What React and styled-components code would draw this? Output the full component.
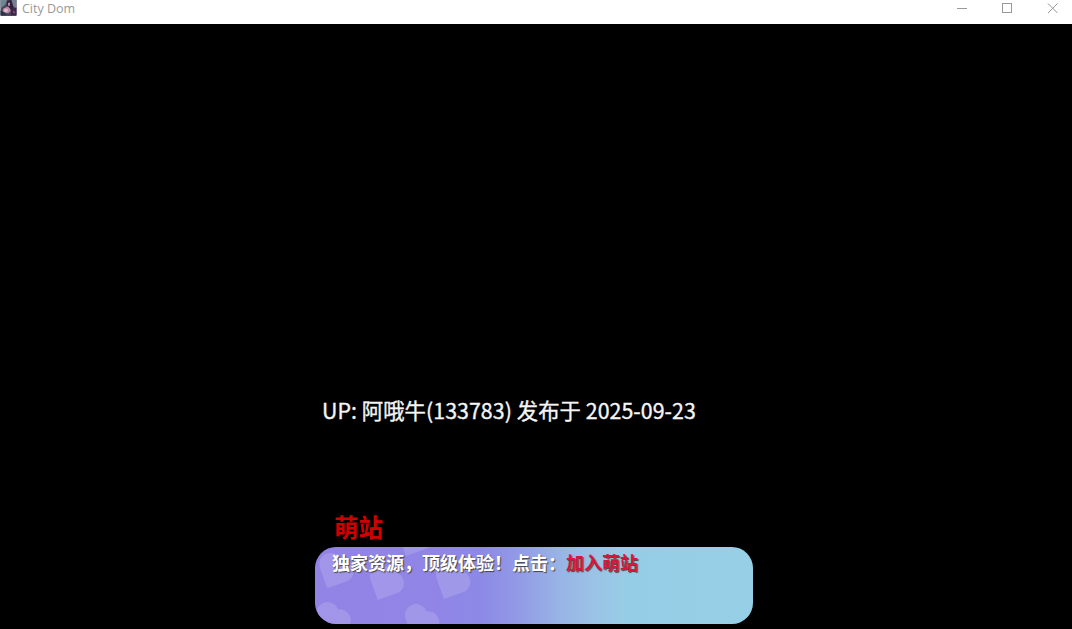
import styled, { createGlobalStyle } from "styled-components";

const hearts = [
  { x: 12.3, y: 41.3 },
  { x: 62.8, y: 53 },
  { x: 129, y: 52 },
  { x: 91, y: 9 },
  { x: 9.5, y: 90.4 },
  { x: 98, y: 92.4 },
];

const Avatar = () => (
  <AppIcon viewBox="0 0 17 17">
    <rect width="17" height="17" fill="#4b4560" />
    <path d="M0 0h7L5 5 0 9z" fill="#6d8790" />
    <path d="M12 0h5v9l-4-3z" fill="#77808f" />
    <path d="M7 1l4-1 2 5 1 4-4 1-3-4z" fill="#30213f" />
    <path d="M8 3h2v3H8z" fill="#c88fa3" />
    <path d="M3 9l5-2 2 2 1 3-3 2-6-1z" fill="#b98ba8" />
    <path d="M5 9l3 1-1 3-4-1z" fill="#e3b8c0" />
    <path d="M0 11l4 2 2 3H0z" fill="#263448" />
    <path d="M11 10l6-2v8h-6z" fill="#3b2546" />
    <path d="M13 11l3 2-2 2z" fill="#88517b" />
  </AppIcon>
);

const App = () => {
  return (
    <Window>
      <GlobalStyle />
      <TitleBar>
        <Avatar />
        <Title>City Dom</Title>
        <Controls viewBox="0 0 120 24">
          <path d="M5 8.5h10M50.500 3.500h9v9h-9z" />
          <path d="M96 3.500l9.500 9.500M105.500 3.500L96 13" shapeRendering="auto" />
        </Controls>
      </TitleBar>
      <Content>
        <Publisher>UP: 阿哦牛(133783) 发布于 2025-09-23</Publisher>
        <SiteName>萌站</SiteName>
        <Banner>
          <Hearts viewBox="0 0 438 77">
            {hearts.map(({ x, y }) => (
              <path
                key={`${x}-${y}`}
                d={`M${x} ${y}l-7.500 -20.500a11.150 11.150 0 0 1 21 -7.500a11.150 11.150 0 0 1 7.500 20.500z`}
              />
            ))}
          </Hearts>
          <Message>
            独家资源，顶级体验！点击：<JoinLink href="#">加入萌站</JoinLink>
          </Message>
        </Banner>
      </Content>
    </Window>
  );
};

const GlobalStyle = createGlobalStyle`
  body {
    margin: 0;
    background: #000;
    overflow: hidden;
  }
  * {
    box-sizing: border-box;
  }
`;

const Window = styled.div`
  display: flex;
  flex-direction: column;
  width: 1072px;
  height: 629px;
  font-family: "Noto Sans CJK SC", sans-serif;
`;

const TitleBar = styled.header`
  display: flex;
  align-items: flex-start;
  height: 24px;
  background: #fff;
`;

const AppIcon = styled.svg`
  width: 17px;
  height: 16px;
`;

const Title = styled.span`
  margin-left: 5px;
  color: #999;
  font: 12.5px/18px "Open Sans", sans-serif;
`;

const Controls = styled.svg`
  width: 120px;
  height: 24px;
  margin-left: auto;
  fill: none;
  stroke: #999;
  shape-rendering: crispEdges;
`;

const Content = styled.main`
  display: flex;
  flex: 1;
  flex-direction: column;
  align-items: flex-start;
  padding: 370px 0 0 315px;
  background: #000;
`;

const Publisher = styled.p`
  margin: 0 0 0 7px;
  color: #f5f5f5;
  font-size: 21.33px;
  letter-spacing: 0.06px;
  line-height: 32px;
  white-space: nowrap;
  -webkit-text-stroke: 0.35px #f5f5f5;
`;

const SiteName = styled.h2`
  margin: 85px 0 0 19px;
  color: #d10000;
  font-size: 24.5px;
  font-weight: 700;
  line-height: 32px;
`;

const Banner = styled.section`
  position: relative;
  width: 438px;
  height: 77px;
  margin-top: 4px;
  padding: 2px 17px;
  border-radius: 21px;
  overflow: hidden;
  background: linear-gradient(
    90deg,
    #9283e5 0%,
    #9085e6 28%,
    #8d89e6 38%,
    #9299e6 46%,
    #98b4e6 56%,
    #9bc3e6 64%,
    #96cde6 71%,
    #96cfe6 100%
  );
`;

const Hearts = styled.svg`
  position: absolute;
  inset: 0;
  width: 438px;
  height: 77px;
  fill: #fff;
  fill-opacity: 0.15;
`;

const Message = styled.p`
  position: relative;
  margin: 0;
  color: #fff;
  font-size: 18px;
  font-weight: 700;
  line-height: 26px;
  white-space: nowrap;
  text-shadow: 1px 1px 1px #444;
`;

const JoinLink = styled.a`
  color: #dc143c;
  text-decoration: none;
`;

export default App;
